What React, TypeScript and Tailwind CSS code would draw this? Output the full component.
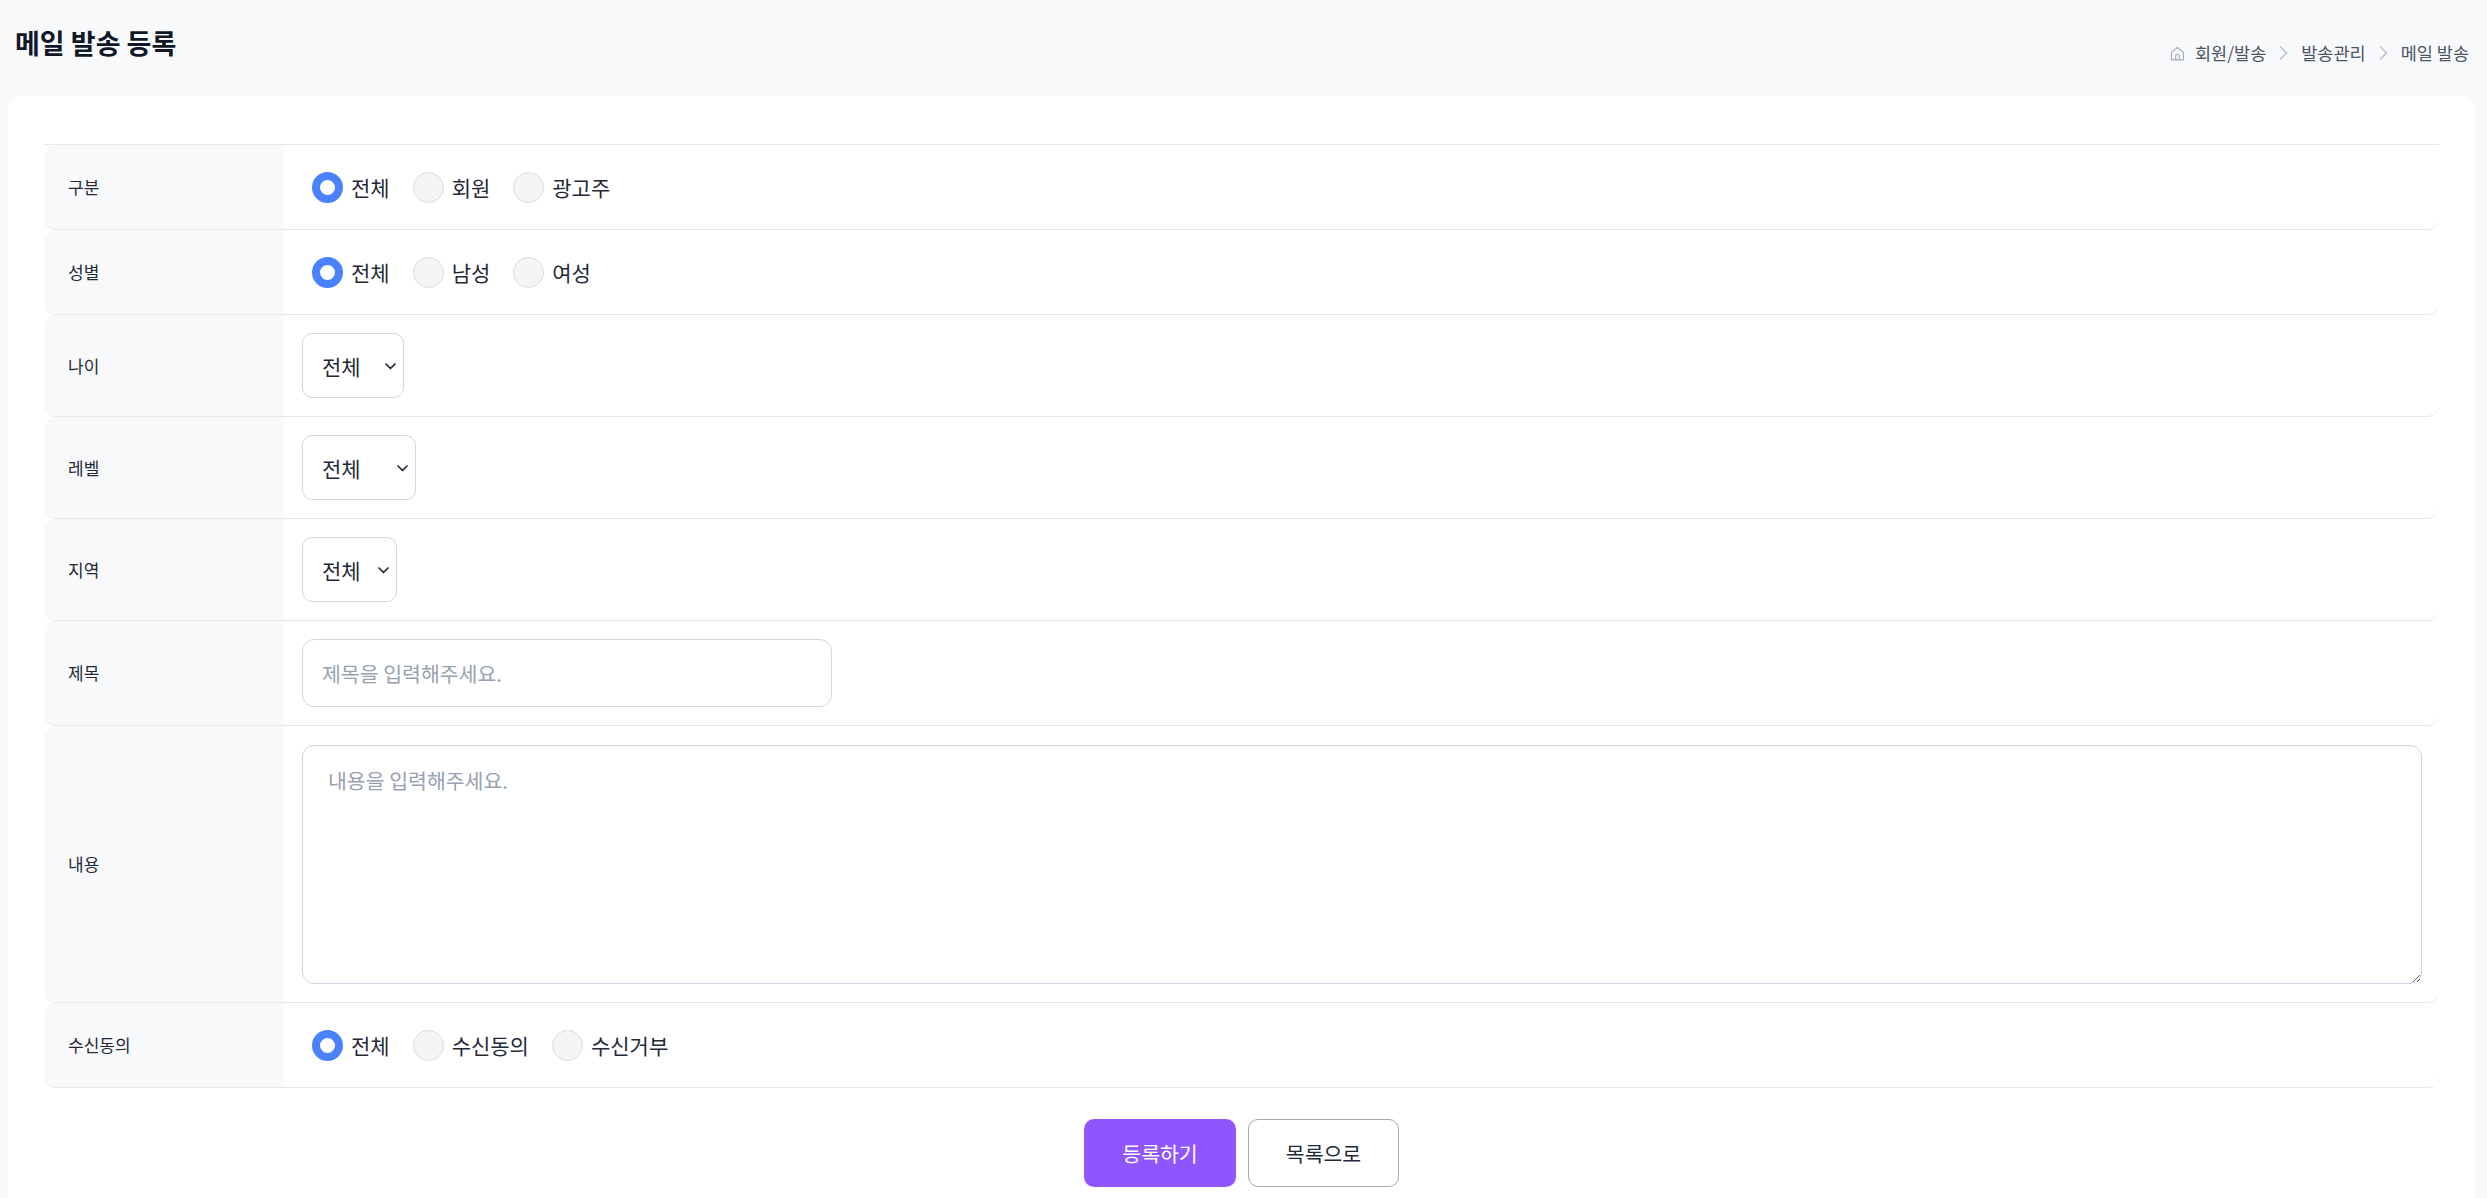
import React from "react";

const FONT = { fontFamily: '"Noto Sans CJK KR", "Noto Sans", sans-serif' };

function Radio({ label, checked }: { label: string; checked?: boolean }) {
  return (
    <label className="flex items-center gap-[8px] cursor-pointer">
      {checked ? (
        <span className="w-[31px] h-[31px] rounded-full border-[8px] border-[#4a82fb] bg-white box-border" />
      ) : (
        <span className="w-[31px] h-[31px] rounded-full border border-[#dcdcdc] bg-[#f5f5f5] box-border" />
      )}
      <span className="text-[21px] text-[#1f2937] leading-[28px]">{label}</span>
    </label>
  );
}

function RadioGroup({ items }: { items: string[] }) {
  return (
    <div className="flex items-center h-[32px] gap-[23px] ml-[10px]">
      {items.map((it, i) => (
        <Radio key={it} label={it} checked={i === 0} />
      ))}
    </div>
  );
}

function Select({ width }: { width: string }) {
  return (
    <div
      className={`relative h-[65px] ${width} rounded-[10px] border border-[#d4d7dd] bg-white flex items-center pl-[19px]`}
    >
      <span className="text-[21px] text-[#1f2937] leading-[28px]">전체</span>
      <svg
        className="absolute right-[6px] top-1/2 -translate-y-1/2"
        width="13"
        height="13"
        viewBox="0 0 13 13"
        fill="none"
      >
        <path d="M2 4.5l4.5 4.5 4.5-4.5" stroke="#1f2937" strokeWidth="1.7" strokeLinecap="round" strokeLinejoin="round" />
      </svg>
    </div>
  );
}

function Row({
  label,
  children,
  py,
}: {
  label: string;
  children: React.ReactNode;
  py: string;
}) {
  return (
    <div className="flex rounded-[12px] overflow-hidden border-b border-[#e5e7eb]">
      <div className="w-[240px] shrink-0 bg-[#f8f9fb] flex items-center pl-[24px]">
        <span className="text-[17px] text-[#1f2937]">{label}</span>
      </div>
      <div className={`flex-1 flex items-center pl-[18px] pr-[17px] ${py}`}>{children}</div>
    </div>
  );
}

function Chevron() {
  return (
    <svg width="9" height="16" viewBox="0 0 9 16" fill="none">
      <path d="M1.5 2l6 6-6 6" stroke="#b6bcc6" strokeWidth="1.3" strokeLinecap="round" strokeLinejoin="round" />
    </svg>
  );
}

export default function App() {
  return (
    <div className="min-h-screen bg-[#f8f9fb] flex flex-col" style={FONT}>
      <div className="h-[96px] flex items-start justify-between pl-[15px] pr-[18px] shrink-0">
        <h1 className="mt-[24px] text-[27px] leading-[38px] font-bold text-[#111827]">메일 발송 등록</h1>
        <div className="mt-[41px] flex items-center text-[17.5px] leading-[24px] text-[#4b5563]">
          <svg width="17" height="17" viewBox="0 0 24 24" fill="none" className="mr-[9px]">
            <path
              d="M3.5 10.5L12 3.5l8.5 7V20a1 1 0 0 1-1 1h-15a1 1 0 0 1-1-1z"
              stroke="#a3a9b3"
              strokeWidth="1.6"
              strokeLinejoin="round"
            />
            <path d="M9.5 21v-5.5a2.5 2.5 0 0 1 5 0V21" stroke="#a3a9b3" strokeWidth="1.6" />
          </svg>
          <span>회원/발송</span>
          <span className="mx-[13px] flex items-center">
            <Chevron />
          </span>
          <span>발송관리</span>
          <span className="mx-[13px] flex items-center">
            <Chevron />
          </span>
          <span>메일 발송</span>
        </div>
      </div>

      <div className="flex-1 ml-[8px] mr-[12px] bg-white rounded-t-[12px] pt-[48px] px-[36px] pb-[12px]">
        <div className="border-t border-[#e5e7eb]">
          <Row label="구분" py="py-[26px]">
            <RadioGroup items={["전체", "회원", "광고주"]} />
          </Row>
          <Row label="성별" py="py-[26px]">
            <RadioGroup items={["전체", "남성", "여성"]} />
          </Row>
          <Row label="나이" py="py-[18px]">
            <Select width="w-[102px]" />
          </Row>
          <Row label="레벨" py="py-[18px]">
            <Select width="w-[114px]" />
          </Row>
          <Row label="지역" py="py-[18px]">
            <Select width="w-[95px]" />
          </Row>
          <Row label="제목" py="py-[18px]">
            <input
              type="text"
              placeholder="제목을 입력해주세요."
              className="w-[530px] h-[68px] rounded-[12px] border border-[#d4d7dd] px-[19px] text-[20.5px] text-[#1f2937] placeholder:text-[#97a1b1] outline-none"
              style={FONT}
            />
          </Row>
          <Row label="내용" py="py-[18.5px]">
            <textarea
              placeholder="내용을 입력해주세요."
              className="w-full h-[239px] rounded-[12px] border border-[#cbd6e2] px-[25px] py-[20px] text-[20.5px] leading-[28px] text-[#1f2937] placeholder:text-[#97a1b1] outline-none block"
              style={FONT}
            />
          </Row>
          <Row label="수신동의" py="py-[26px]">
            <RadioGroup items={["전체", "수신동의", "수신거부"]} />
          </Row>
        </div>

        <div className="flex justify-center gap-[12px] mt-[31px]">
          <button className="w-[152px] h-[68px] rounded-[10px] bg-[#9155fd] text-white text-[20.5px]">
            등록하기
          </button>
          <button className="w-[151px] h-[68px] rounded-[10px] border border-[#a3a9b5] bg-white text-[#1f2937] text-[20.5px]">
            목록으로
          </button>
        </div>
      </div>
    </div>
  );
}
